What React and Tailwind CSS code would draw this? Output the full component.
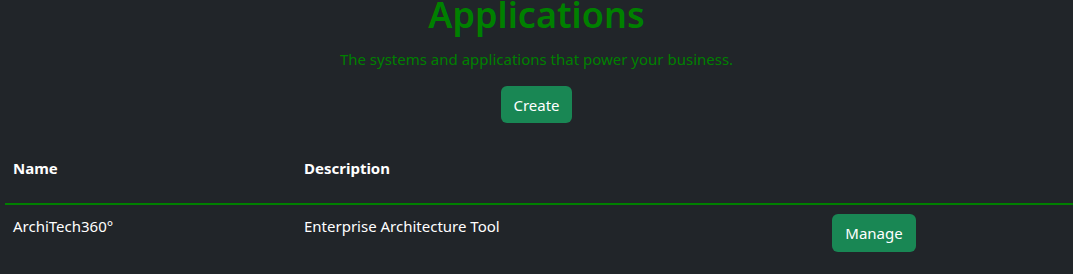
import React from 'react';

const apps = [
  { name: 'ArchiTech360°', description: 'Enterprise Architecture Tool' },
];

const App = () => {
  return (
    <div className="min-h-[274px] bg-[#212529] overflow-hidden font-['Noto_Sans',sans-serif] text-white">
      {/* Page header */}
      <div className="flex flex-col items-center">
        <h1 className="mt-[-7px] text-[36px] leading-[1.2] font-semibold text-[#008000]">Applications</h1>
        <p className="mt-[11px] text-[15px] leading-6 text-[#008000]">
          The systems and applications that power your business.
        </p>
        <button className="mt-[15px] h-[37px] px-3 rounded-md bg-[#198754] text-[15px] leading-6 text-white">
          Create
        </button>
      </div>

      {/* Applications table */}
      <table className="ml-[5px] mt-[25px] w-[1100px] border-collapse text-left">
        <thead>
          <tr className="border-b-2 border-[#008000]">
            <th className="w-[291px] px-2 pt-2 pb-[23px] text-[15px] leading-6 font-bold">Name</th>
            <th className="w-[528px] px-2 pt-2 pb-[23px] text-[15px] leading-6 font-bold">Description</th>
            <th className="px-2 pt-2 pb-[23px]"></th>
          </tr>
        </thead>
        <tbody>
          {apps.map((app) => (
            <tr key={app.name}>
              <td className="px-2 pt-[9px] pb-2 align-top text-[15px] leading-6">{app.name}</td>
              <td className="px-2 pt-[9px] pb-2 align-top text-[15px] leading-6">{app.description}</td>
              <td className="px-2 py-2 align-top">
                <button className="mt-px h-[38px] w-[84px] rounded-md bg-[#198754] text-[15px] leading-6 text-white">
                  Manage
                </button>
              </td>
            </tr>
          ))}
        </tbody>
      </table>
    </div>
  );
};

export default App;
